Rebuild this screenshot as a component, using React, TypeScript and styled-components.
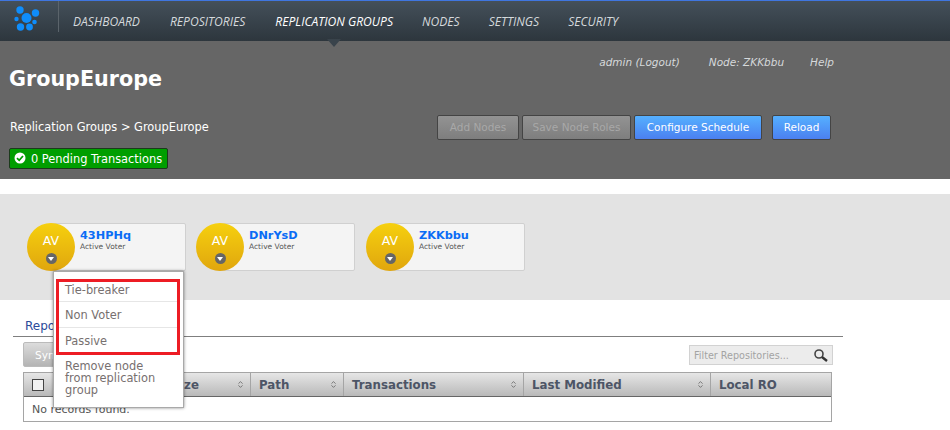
import React from "react";
import styled, { createGlobalStyle } from "styled-components";
import { ChevronDown, ChevronUp } from "lucide-react";

const GlobalStyle = createGlobalStyle`
  html, body {
    margin: 0;
    padding: 0;
    background: #fff;
    overflow: hidden;
    font-family: "DejaVu Sans", Verdana, sans-serif;
  }
  * { box-sizing: border-box; }
`;

const Page = styled.div`
  width: 950px;
  height: 430px;
  overflow: hidden;
  background: #fff;
`;

const TopBar = styled.nav`
  height: 41px;
  border-top: 1px solid #3f76e0;
  background: linear-gradient(to bottom, #44505a 0%, #2d363d 100%);
  display: flex;
  align-items: center;
  position: relative;
`;

const LogoCell = styled.div`
  width: 59px;
  height: 31px;
  align-self: flex-start;
  padding: 5px 0 0 14px;
  border-right: 1px solid #5b646b;
  display: flex;
  align-items: center;
`;

const NavItem = styled.a<{ $active?: boolean; $gap: number }>`
  margin-left: ${(p) => p.$gap}px;
  margin-top: 1px;
  font-family: "Open Sans", sans-serif;
  font-style: italic;
  font-size: 12.1px;
  white-space: nowrap;
  color: ${(p) => (p.$active ? "#fff" : "#d5d9dc")};
  position: relative;
`;

const ActiveArrow = styled.span`
  position: absolute;
  left: 50%;
  margin-left: -7px;
  top: 26px;
  width: 0;
  height: 0;
  border-left: 7px solid transparent;
  border-right: 7px solid transparent;
  border-top: 8px solid #39434b;
`;

const Header = styled.header`
  height: 138px;
  background: #666;
  padding: 0 10px;
  display: flex;
  flex-direction: column;
`;

const HeaderTop = styled.div`
  display: flex;
  justify-content: space-between;
  height: 73px;
`;

const Title = styled.h1`
  margin: 23px 0 0 -1px;
  font-family: "DejaVu Sans", sans-serif;
  font-size: 20.7px;
  line-height: 30px;
  font-weight: 700;
  color: #fff;
`;

const UserLinks = styled.div`
  display: flex;
  margin: 14px 106px 0 0;
  font-size: 10.5px;
  line-height: 14px;
  font-style: italic;
  color: #d6d9db;
`;

const UserLink = styled.span<{ $gap?: number }>`
  margin-left: ${(p) => p.$gap ?? 0}px;
`;

const ActionRow = styled.div`
  display: flex;
  align-items: center;
  justify-content: space-between;
  height: 26px;
`;

const Crumbs = styled.div`
  font-size: 11.4px;
  color: #fff;
`;

const Actions = styled.div`
  display: flex;
  margin-right: 109px;
`;

const Action = styled.button<{ $primary?: boolean; $gap?: number; $width: number }>`
  width: ${(p) => p.$width}px;
  height: 25px;
  margin-left: ${(p) => p.$gap ?? 3}px;
  padding: 0;
  border: 1px solid #444;
  border-radius: 2px;
  font-family: "DejaVu Sans", sans-serif;
  font-size: 10.5px;
  color: ${(p) => (p.$primary ? "#fff" : "#a8a8a8")};
  background: ${(p) =>
    p.$primary
      ? "linear-gradient(to bottom, #55b0ff, #4b80f0)"
      : "linear-gradient(to bottom, #939393, #7e7e7e)"};
`;

const PendingBadge = styled.div`
  margin-top: 8px;
  width: 159px;
  height: 21px;
  margin-left: -1px;
  background: #009e00;
  border: 1px solid #1c3a1c;
  border-radius: 2px;
  display: flex;
  align-items: center;
  gap: 5px;
  padding-left: 4px;
  font-size: 11.4px;
  color: #fff;
  white-space: nowrap;
`;

const CheckDisc = styled.svg`
  width: 12px;
  height: 12px;
  margin-top: -2px;
  flex: none;
`;

const NodeBand = styled.section`
  margin-top: 15px;
  height: 106px;
  background: #e3e3e3;
  padding: 29px 0 0 27px;
  display: flex;
`;

const NodeCard = styled.div<{ $gap: number }>`
  position: relative;
  width: 159px;
  height: 48px;
  margin-right: ${(p) => p.$gap}px;
  display: flex;
`;

const Avatar = styled.div`
  position: relative;
  z-index: 1;
  width: 48px;
  height: 48px;
  flex: none;
  border-radius: 50%;
  background: linear-gradient(to bottom, #f6d00e, #e0a60e);
  text-align: center;
  color: #fff;
  font-size: 12.5px;
  line-height: 14px;
  padding-top: 11px;
`;

const AvatarCaret = styled.span`
  position: absolute;
  left: 19px;
  top: 30px;
  width: 11px;
  height: 11px;
  border-radius: 50%;
  background: #666;
  &::after {
    content: "";
    position: absolute;
    left: 2px;
    top: 4px;
    border-left: 3.5px solid transparent;
    border-right: 3.5px solid transparent;
    border-top: 4px solid #fff;
  }
`;

const CardBody = styled.div`
  flex: 1;
  margin-left: -24px;
  padding: 5px 0 0 28px;
  background: #f4f4f4;
  border: 1px solid #d0d0d0;
  border-radius: 2px;
`;

const NodeName = styled.div`
  font-size: 11.3px;
  line-height: 14px;
  font-weight: 700;
  color: #0a6cf5;
`;

const NodeRole = styled.div`
  font-size: 7.5px;
  line-height: 9px;
  margin-top: -1px;
  color: #555;
`;

const Menu = styled.div`
  position: absolute;
  z-index: 5;
  left: 26px;
  top: 48px;
  width: 131px;
  height: 137px;
  background: #fff;
  border: 1px solid #a9a9a9;
  box-shadow: 0 0 3px rgba(0, 0, 0, 0.45);
  padding: 7px 5px 0 2px;
`;

const Highlight = styled.div`
  border: 3px solid #ed1c24;
  height: 76px;
  width: 124px;
`;

const MenuItem = styled.div<{ $height: number; $line: number; $last?: boolean }>`
  height: ${(p) => p.$height}px;
  padding-left: 6px;
  border-bottom: ${(p) => (p.$last ? "none" : "1px solid #e6e6e6")};
  font-size: 11.4px;
  line-height: ${(p) => p.$line}px;
  color: #77706f;
`;

const MenuRemove = styled.div`
  margin: 5px 0 0 9px;
  width: 100px;
  font-size: 11.4px;
  line-height: 12px;
  color: #77706f;
`;

const Content = styled.section`
  padding: 0 0 0 13px;
`;

const Tabs = styled.div`
  width: 830px;
  height: 37px;
  border-bottom: 1px solid #7f7f7f;
  padding: 18px 0 0 12px;
  font-size: 12px;
  line-height: 16px;
  color: #2a4a9a;
`;

const Toolbar = styled.div`
  width: 810px;
  margin-left: 10px;
  height: 35px;
  display: flex;
  justify-content: space-between;
  align-items: flex-start;
  padding-top: 5px;
`;

const SyncButton = styled.button`
  width: 90px;
  height: 25px;
  padding: 0 0 0 11px;
  text-align: left;
  border: 1px solid #bbb;
  border-radius: 2px;
  background: linear-gradient(to bottom, #dcdcdc, #b4b4b4);
  color: #fff;
  font-family: "DejaVu Sans", sans-serif;
  font-size: 10.5px;
`;

const Filter = styled.div`
  width: 144px;
  height: 20px;
  margin-top: 3px;
  background: #ececec;
  border: 1px solid #d2d2d2;
  display: flex;
  align-items: center;
  justify-content: space-between;
  padding: 0 3px 0 4px;
  font-size: 9.6px;
  color: #a3a3a3;
`;

const Table = styled.div`
  width: 809px;
  margin-left: 10px;
  border: 1px solid #a5a5a5;
  border-top: none;
`;

const HeadRow = styled.div`
  height: 25px;
  display: grid;
  grid-template-columns: 227px 93px 180px 187px 120px;
  background: linear-gradient(to bottom, #e6e6e6, #b9b9b9);
  border-top: 1px solid #a5a5a5;
  border-bottom: 1px solid #666;
`;

const HeadCell = styled.div`
  display: flex;
  align-items: center;
  justify-content: space-between;
  padding: 0 6px 0 8px;
  border-right: 1px solid #a5a5a5;
  font-family: "DejaVu Sans", sans-serif;
  font-size: 11.8px;
  font-weight: 700;
  color: #4d5566;
  &:last-child { border-right: none; }
`;

const SizeLabel = styled.span`
  margin-left: auto;
  margin-right: 38px;
`;

const Check = styled.span`
  width: 12px;
  height: 12px;
  border: 1px solid #444;
  background: #f2f2f2;
`;

const SortIcon = styled.span`
  display: flex;
  flex-direction: column;
  color: #555;
  svg { display: block; margin: -1.5px 0; }
`;

const Empty = styled.div`
  height: 24px;
  padding: 0 0 0 8px;
  font-size: 11px;
  line-height: 25px;
  color: #555;
`;

function Sort() {
  return (
    <SortIcon>
      <ChevronUp size={7} strokeWidth={2.5} />
      <ChevronDown size={7} strokeWidth={2.5} />
    </SortIcon>
  );
}

const nodes = [
  { name: "43HPHq", gap: 10, open: true },
  { name: "DNrYsD", gap: 11, open: false },
  { name: "ZKKbbu", gap: 0, open: false },
];

export default function App() {
  return (
    <Page>
      <GlobalStyle />
      <TopBar>
        <LogoCell>
          <svg width="26" height="26" viewBox="0 0 26 26">
            <g fill="#0f8dfb">
              <circle cx="6" cy="4" r="3.7" />
              <circle cx="12.5" cy="12" r="5" />
              <circle cx="21.5" cy="7" r="3.7" />
              <circle cx="2.5" cy="13" r="2.2" />
              <circle cx="20.5" cy="16" r="2.3" />
              <circle cx="6.5" cy="21" r="3.7" />
              <circle cx="15.5" cy="21" r="3.4" />
            </g>
          </svg>
        </LogoCell>
        <NavItem $gap={14}>DASHBOARD</NavItem>
        <NavItem $gap={30}>REPOSITORIES</NavItem>
        <NavItem $gap={30} $active>
          REPLICATION GROUPS
          <ActiveArrow />
        </NavItem>
        <NavItem $gap={29}>NODES</NavItem>
        <NavItem $gap={29}>SETTINGS</NavItem>
        <NavItem $gap={29}>SECURITY</NavItem>
      </TopBar>

      <Header>
        <HeaderTop>
          <Title>GroupEurope</Title>
          <UserLinks>
            <UserLink>admin (Logout)</UserLink>
            <UserLink $gap={29}>Node: ZKKbbu</UserLink>
            <UserLink $gap={26}>Help</UserLink>
          </UserLinks>
        </HeaderTop>
        <ActionRow>
          <Crumbs>Replication Groups &gt; GroupEurope</Crumbs>
          <Actions>
            <Action $width={82}>Add Nodes</Action>
            <Action $width={109}>Save Node Roles</Action>
            <Action $width={128} $primary>
              Configure Schedule
            </Action>
            <Action $width={59} $gap={10} $primary>
              Reload
            </Action>
          </Actions>
        </ActionRow>
        <PendingBadge>
          <CheckDisc viewBox="0 0 12 12">
            <circle cx="6" cy="6" r="5.5" fill="#fff" />
            <path d="M3 6.2 L5.2 8.3 L9 4" fill="none" stroke="#009e00" strokeWidth="1.8" />
          </CheckDisc>
          0 Pending Transactions
        </PendingBadge>
      </Header>

      <NodeBand>
        {nodes.map((n) => (
          <NodeCard key={n.name} $gap={n.gap}>
            <Avatar>
              AV
              <AvatarCaret />
            </Avatar>
            <CardBody>
              <NodeName>{n.name}</NodeName>
              <NodeRole>Active Voter</NodeRole>
            </CardBody>
            {n.open && (
              <Menu>
                <Highlight>
                  <MenuItem $height={20} $line={17}>
                    Tie-breaker
                  </MenuItem>
                  <MenuItem $height={26} $line={27}>
                    Non Voter
                  </MenuItem>
                  <MenuItem $height={24} $line={26} $last>
                    Passive
                  </MenuItem>
                </Highlight>
                <MenuRemove>Remove node from replication group</MenuRemove>
              </Menu>
            )}
          </NodeCard>
        ))}
      </NodeBand>

      <Content>
        <Tabs>Repositories</Tabs>
        <Toolbar>
          <SyncButton>Sync</SyncButton>
          <Filter>
            Filter Repositories...
            <svg width="16" height="14" viewBox="0 0 16 14">
              <circle cx="6" cy="6" r="4" fill="none" stroke="#444" strokeWidth="1.6" />
              <path d="M9 9 L14 13" stroke="#333" strokeWidth="2.4" />
            </svg>
          </Filter>
        </Toolbar>
        <Table>
          <HeadRow>
            <HeadCell>
              <Check />
              <SizeLabel>Size</SizeLabel>
              <Sort />
            </HeadCell>
            <HeadCell>
              Path
              <Sort />
            </HeadCell>
            <HeadCell>
              Transactions
              <Sort />
            </HeadCell>
            <HeadCell>
              Last Modified
              <Sort />
            </HeadCell>
            <HeadCell>Local RO</HeadCell>
          </HeadRow>
          <Empty>No records found.</Empty>
        </Table>
      </Content>
    </Page>
  );
}
